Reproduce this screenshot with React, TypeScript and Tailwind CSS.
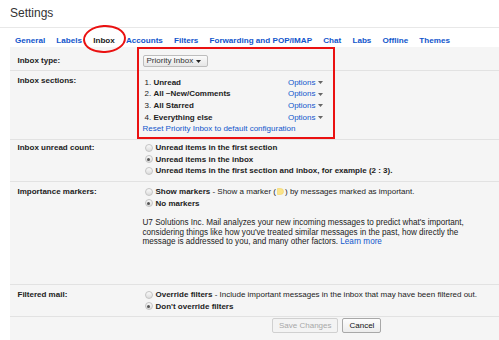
import React from "react";

const tabs = ["General", "Labels", "Inbox", "Accounts", "Filters", "Forwarding and POP/IMAP", "Chat", "Labs", "Offline", "Themes"];

const sections = ["Unread", "All ~New/Comments", "All Starred", "Everything else"];

const Radio = ({ checked }: { checked?: boolean }) => (
  <span className="inline-flex w-[8px] h-[8px] mr-[3px] rounded-full border border-[#c4c4c4] bg-gradient-to-b from-[#fafafa] to-[#dcdcdc] items-center justify-center shrink-0">
    {checked && <span className="w-[3px] h-[3px] rounded-full bg-[#555]" />}
  </span>
);

const Caret = () => (
  <svg width="5" height="3" viewBox="0 0 5 3" className="ml-[2px]">
    <path d="M0 0h5L2.5 3z" fill="#666" />
  </svg>
);

const Row = ({ label, className, children }: { label: string; className: string; children: React.ReactNode }) => (
  <div className={`grid grid-cols-[125px_1fr] pl-[7.5px] border-b border-[#e2e2e2] ${className}`}>
    <div className="font-bold text-[#222] leading-[11.67px]">{label}</div>
    <div>{children}</div>
  </div>
);

const App = () => {
  return (
    <div className="relative w-[499px] h-[340px] overflow-hidden bg-white font-['Liberation_Sans',Arial,sans-serif]">
      <div className="h-[28px] border-b border-[#e8e8e8] pl-[10px] pt-[6px] text-[12px] leading-[14px] text-[#333]">
        Settings
      </div>
      <div className="h-[19px] flex gap-[11.2px] pl-[15px] pt-[8px] text-[8.1px] leading-[10px] font-bold">
        {tabs.map((t) => (
          <span key={t} className={t === "Inbox" ? "text-[#222]" : "text-[#1155cc]"}>
            {t}
          </span>
        ))}
      </div>

      <div className="ml-[10px] h-[293px] bg-[#f5f5f5] text-[8px] text-[#222]">
        <Row label="Inbox type:" className="items-center pt-[8px] pb-[3px]">
          <div className="w-[65px] h-[12px] flex items-center justify-between px-[3px] border border-[#bdbdbd] rounded-[2px] bg-gradient-to-b from-[#fbfbfb] to-[#e6e6e6] text-[#333] leading-[10px]">
            <span>Priority Inbox</span>
            <svg width="5" height="3" viewBox="0 0 5 3" className="mr-[3px]">
              <path d="M0 0h5L2.5 3z" fill="#222" />
            </svg>
          </div>
        </Row>

        <Row label="Inbox sections:" className="pt-[4px] pb-[4px]">
          <div className="mt-[1.5px] leading-[11.67px]">
            {sections.map((s, i) => (
              <div key={s} className="w-[180px] flex justify-between items-center pl-[2px]">
                <span>
                  {i + 1}. <b>{s}</b>
                </span>
                <span className="flex items-center text-[#1155cc]">
                  Options
                  <Caret />
                </span>
              </div>
            ))}
            <div className="text-[#1155cc]">Reset Priority Inbox to default configuration</div>
          </div>
        </Row>

        <Row label="Inbox unread count:" className="pt-[2px] pb-[4px]">
          <div className="leading-[11.67px] font-bold pl-[2px]">
            <div className="flex items-center"><Radio />Unread items in the first section</div>
            <div className="flex items-center"><Radio checked />Unread items in the inbox</div>
            <div className="flex items-center"><Radio />Unread items in the first section and inbox, for example (2 : 3).</div>
          </div>
        </Row>

        <Row label="Importance markers:" className="pt-[4px] pb-[37px]">
          <div className="leading-[11.67px] pl-[2px]">
            <div className="flex items-center">
              <Radio />
              <b>Show markers</b>
              <span className="whitespace-pre"> - Show a marker (</span>
              <svg width="7" height="7" viewBox="0 0 7 7" className="mx-[1px]">
                <path d="M0.5 0.5h3a3 3 0 0 1 0 6h-3z" fill="#fbe48a" stroke="#f3d561" strokeWidth="0.6" />
              </svg>
              <span className="whitespace-pre">) by messages marked as important.</span>
            </div>
            <div className="flex items-center font-bold"><Radio checked />No markers</div>
          </div>
          <p className="mt-[9px] w-[330px] text-[8.15px] leading-[9.5px]">
            U7 Solutions Inc. Mail analyzes your new incoming messages to predict what's important, considering things like how you've treated similar messages in the past, how directly the message is addressed to you, and many other factors. <a className="text-[#1155cc]">Learn more</a>
          </p>
        </Row>

        <div className="grid grid-cols-[125px_1fr] pl-[7.5px] border-b border-[#e2e2e2] pt-[4.6px] pb-[4px]">
          <div className="font-bold leading-[11.3px]">Filtered mail:</div>
          <div className="leading-[11.3px] pl-[2px]">
            <div className="flex items-center">
              <Radio />
              <b>Override filters</b>
              <span className="whitespace-pre"> - Include important messages in the inbox that may have been filtered out.</span>
            </div>
            <div className="flex items-center font-bold"><Radio checked />Don't override filters</div>
          </div>
        </div>

        <div className="flex gap-[4px] pl-[262px] pt-[1px]">
          <button type="button" className="h-[15px] px-[6px] border border-[#d0d0d0] rounded-[2px] bg-[#f3f3f3] text-[#a8a8a8] text-[8px] leading-[13px]">
            Save Changes
          </button>
          <button type="button" className="h-[15px] px-[6px] border border-[#a8a8a8] rounded-[2px] bg-gradient-to-b from-[#fdfdfd] to-[#ececec] text-[#111] text-[8px] leading-[13px]">
            Cancel
          </button>
        </div>
      </div>

      <div className="absolute left-[137px] top-[47px] w-[198px] h-[92px] border-[2.5px] border-[#ea1111]" />
      <div className="absolute left-[83px] top-[25px] w-[43px] h-[28px] rounded-[50%] border-2 border-[#ea1111] -rotate-3" />
    </div>
  );
};

export default App;
